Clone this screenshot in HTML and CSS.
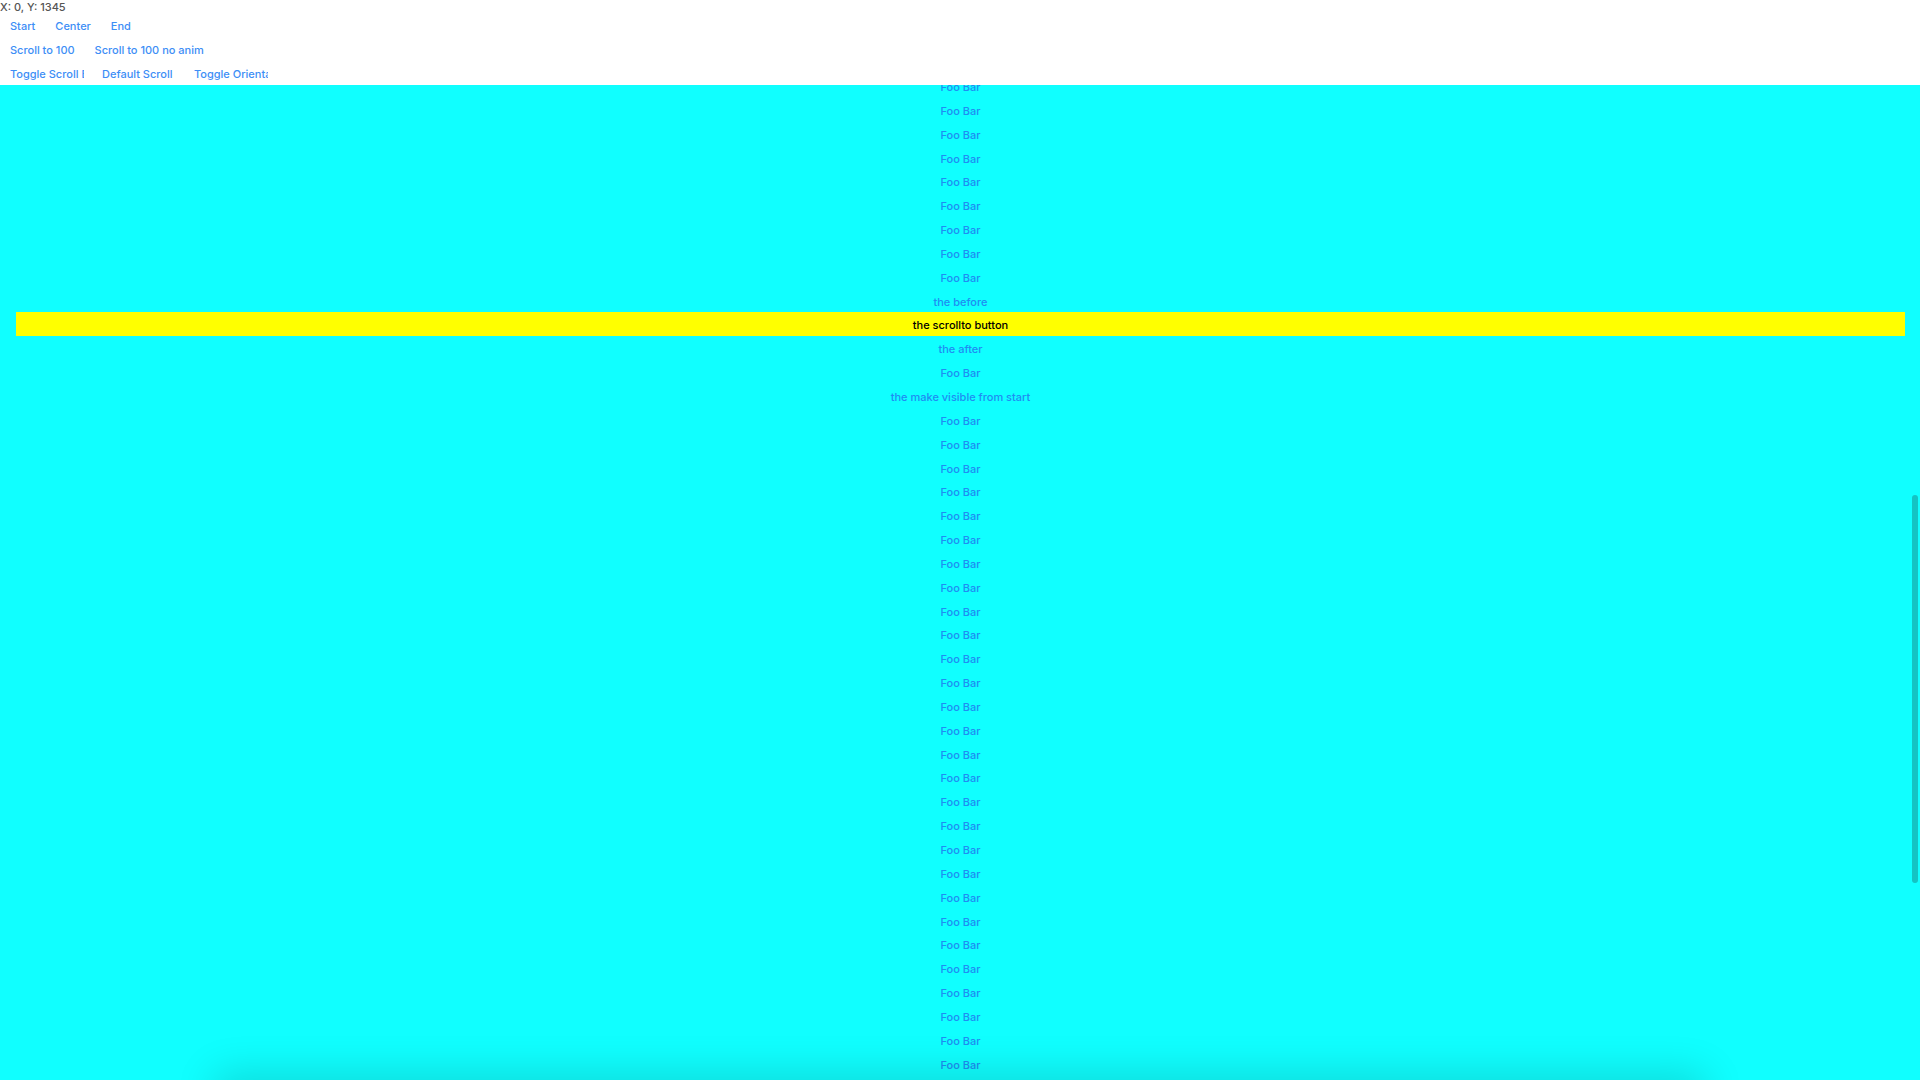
FILE: index.html
```html
<!DOCTYPE html>
<html lang="en">
<head>
  <meta charset="UTF-8" />
  <title>ScrollView example</title>
  <link rel="stylesheet" href="styles.css">
</head>
<body>
  <div class="app">
    <div class="header">
      <div class="coords">X: 0, Y: 1345</div>
      <div class="btnRow">
        <div class="btn">Start</div>
        <div class="btn">Center</div>
        <div class="btn">End</div>
      </div>
      <div class="btnRow">
        <div class="btn">Scroll to 100</div>
        <div class="btn">Scroll to 100 no anim</div>
      </div>
      <div class="btnRow">
        <div class="btn fixed"><span>Toggle Scroll Enabled</span></div>
        <div class="btn fixed"><span>Default Scroll Behavior</span></div>
        <div class="btn fixed"><span>Toggle Orientation</span></div>
      </div>
    </div>

    <div class="scroller">
      <div class="list">
        <div class="item">Foo Bar</div>
        <div class="item">Foo Bar</div>
        <div class="item">Foo Bar</div>
        <div class="item">Foo Bar</div>
        <div class="item">Foo Bar</div>
        <div class="item">Foo Bar</div>
        <div class="item">Foo Bar</div>
        <div class="item">Foo Bar</div>
        <div class="item">Foo Bar</div>
        <div class="item">the before</div>
        <div class="item target">the scrollto button</div>
        <div class="item">the after</div>
        <div class="item">Foo Bar</div>
        <div class="item">the make visible from start</div>
        <div class="item">Foo Bar</div>
        <div class="item">Foo Bar</div>
        <div class="item">Foo Bar</div>
        <div class="item">Foo Bar</div>
        <div class="item">Foo Bar</div>
        <div class="item">Foo Bar</div>
        <div class="item">Foo Bar</div>
        <div class="item">Foo Bar</div>
        <div class="item">Foo Bar</div>
        <div class="item">Foo Bar</div>
        <div class="item">Foo Bar</div>
        <div class="item">Foo Bar</div>
        <div class="item">Foo Bar</div>
        <div class="item">Foo Bar</div>
        <div class="item">Foo Bar</div>
        <div class="item">Foo Bar</div>
        <div class="item">Foo Bar</div>
        <div class="item">Foo Bar</div>
        <div class="item">Foo Bar</div>
        <div class="item">Foo Bar</div>
        <div class="item">Foo Bar</div>
        <div class="item">Foo Bar</div>
        <div class="item">Foo Bar</div>
        <div class="item">Foo Bar</div>
        <div class="item">Foo Bar</div>
        <div class="item">Foo Bar</div>
        <div class="item">Foo Bar</div>
        <div class="item">Foo Bar</div>
        <div class="item">Foo Bar</div>
      </div>
      <div class="thumb"></div>
      <div class="shade"></div>
    </div>
  </div>
</body>
</html>
```

FILE: styles.css
```css
body {
  margin: 0;
  font-family: Inter, 'Noto Sans', sans-serif;
  font-size: 11px;
  font-weight: 500;
  background-color: #fff;
}

.app {
  height: 100vh;
  display: flex;
  flex-direction: column;
}

.header {
  flex: none;
  height: 85px;
}

.coords {
  height: 13px;
  line-height: 15px;
  color: #555;
}

.btnRow {
  display: flex;
  height: 24px;
  line-height: 26px;
}

.btn {
  padding: 0 10px;
  color: #3d8ef6;
  white-space: nowrap;
  cursor: pointer;
}

.btn.fixed {
  width: 92px;
  box-sizing: border-box;
  padding: 0 8px 0 10px;
}

.btn.fixed span {
  display: block;
  overflow: hidden;
}

.scroller {
  flex: 1;
  position: relative;
  overflow: hidden;
  background-color: #10ffff;
}

/* scrolled to y 1345, first row is cut by the header */
.list {
  margin-top: -11px;
  padding: 0 15px 0 16px;
}

.item {
  height: 23.85px;
  line-height: 26.5px;
  text-align: center;
  color: #1f8df2;
  white-space: nowrap;
}

.target {
  background-color: #ffff00;
  color: #000;
}

.thumb {
  position: absolute;
  right: 2px;
  top: 410px;
  width: 6px;
  height: 388px;
  border-radius: 3px;
  background-color: #14c3c3;
}

.shade {
  position: absolute;
  left: 215px;
  right: 215px;
  top: 100%;
  height: 40px;
  box-shadow: 0 -6px 40px rgba(0, 0, 0, 0.16);
}
```
